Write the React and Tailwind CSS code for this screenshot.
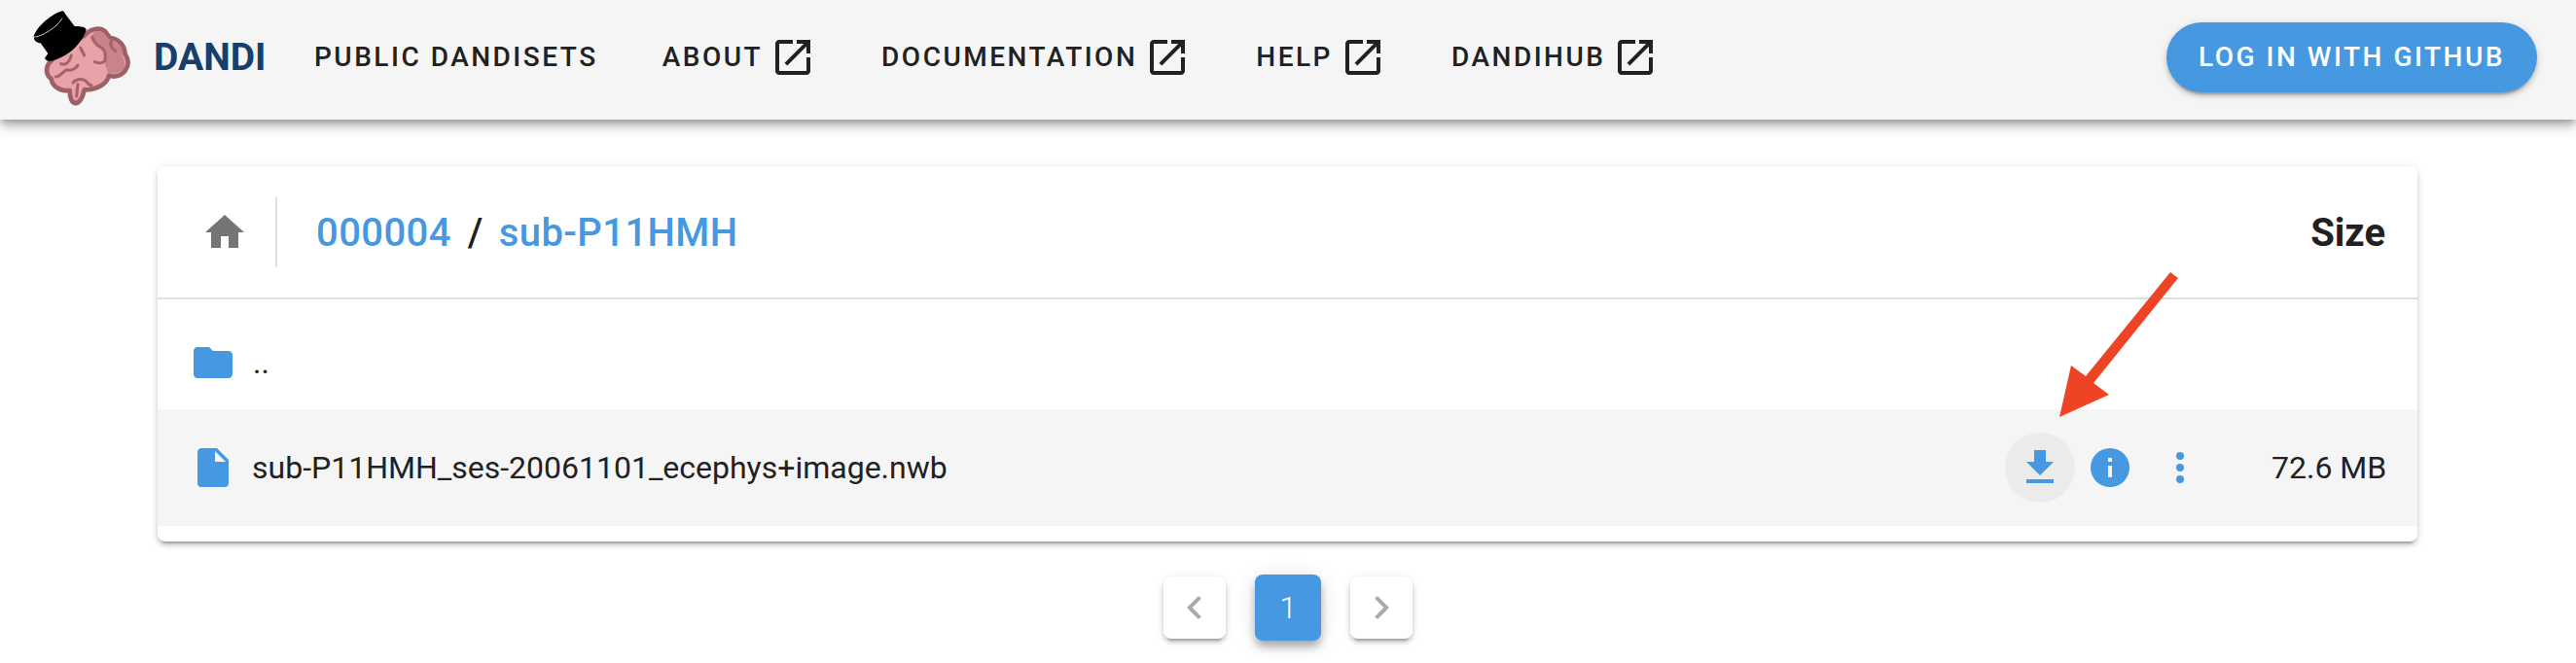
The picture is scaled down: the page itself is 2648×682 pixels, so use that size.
const ICONS = {
  open: "M19 19H5V5h7V3H5c-1.11 0-2 .9-2 2v14c0 1.1.89 2 2 2h14c1.1 0 2-.9 2-2v-7h-2v7zM14 3v2h3.59l-9.83 9.83 1.41 1.41L19 6.41V10h2V3h-7z",
  home: "M10 20v-6h4v6h5v-8h3L12 3 2 12h3v8h5z",
  folder: "M10 4H4c-1.1 0-1.99.9-1.99 2L2 18c0 1.1.9 2 2 2h16c1.1 0 2-.9 2-2V8c0-1.1-.9-2-2-2h-8l-2-2z",
  file: "M13 9V3.5L18.5 9M6 2c-1.11 0-2 .89-2 2v16a2 2 0 002 2h12a2 2 0 002-2V8l-6-6H6z",
  download: "M5 20h14v-2H5m14-9h-4V3H9v6H5l7 7 7-7z",
  info: "M13 9h-2V7h2m0 10h-2v-6h2m-1-9A10 10 0 002 12a10 10 0 0010 10 10 10 0 0010-10A10 10 0 0012 2z",
  dots: "M12 16a2 2 0 012 2 2 2 0 01-2 2 2 2 0 01-2-2 2 2 0 012-2m0-6a2 2 0 012 2 2 2 0 01-2 2 2 2 0 01-2-2 2 2 0 012-2m0-6a2 2 0 012 2 2 2 0 01-2 2 2 2 0 01-2-2 2 2 0 012-2z",
  left: "M15.41 7.41L14 6l-6 6 6 6 1.41-1.41L10.83 12z",
  right: "M8.59 16.59L10 18l6-6-6-6-1.41 1.41L13.17 12z",
};

function Icon({ name, className }) {
  return (
    <svg viewBox="0 0 24 24" className={`w-12 h-12 shrink-0 fill-current ${className || ""}`}>
      <path d={ICONS[name]} fillRule={name === "file" ? "evenodd" : "nonzero"} />
    </svg>
  );
}

function Logo() {
  return (
    <svg viewBox="0 0 420 330" className="w-[140px] h-[110px] shrink-0">
      <path
        d="M200 95C215 75 245 68 262 80C272 90 275 98 280 102C305 104 325 125 325 150C335 165 340 185 326 203C312 220 292 224 276 218C272 240 245 262 200 262C196 275 196 292 178 303C160 306 155 285 155 264C125 268 100 250 98 228C80 215 78 190 100 170C130 130 170 110 200 95Z"
        fill="#e8a2a8"
        stroke="#9c6066"
        strokeWidth="14"
        strokeLinejoin="round"
      />
      <path
        d="M222 95C235 78 250 78 262 88C268 100 280 110 295 112C315 125 320 145 316 158C328 175 328 192 316 204C300 214 285 214 272 208L262 176C270 150 262 135 240 125Z"
        fill="#c9838a"
      />
      <g fill="none" stroke="#a0646a" strokeWidth="9" strokeLinecap="round" strokeLinejoin="round">
        <path d="M224 100C232 118 240 125 246 128C262 135 268 150 264 172C258 180 245 182 232 176" />
        <path d="M284 108C278 120 282 135 296 142" />
        <path d="M188 132L200 156" />
        <path d="M160 156C155 175 145 188 128 182" />
        <path d="M180 186C172 200 155 205 145 200C130 210 125 222 112 222" />
        <path d="M165 240C175 228 195 225 206 236C212 245 215 248 222 248" />
        <path d="M180 245L176 282" />
      </g>
      <path
        d="M44 97C55 65 100 28 132 19C137 19 139 24 141 28L170 66C185 66 200 66 206 75C200 105 165 150 115 168C100 174 85 178 78 164L88 150L65 118C55 118 44 112 44 97Z"
        fill="#000"
      />
      <path d="M44 100C70 98 115 70 132 42" fill="none" stroke="#ededed" strokeWidth="2.5" strokeLinecap="round" />
    </svg>
  );
}

function NavItem({ label, external, className }) {
  return (
    <div className={`flex items-center text-[28px] font-medium tracking-[2.5px] text-[#212121] ${className || ""}`}>
      <span>{label}</span>
      {external && <Icon name="open" className="ml-[7px] text-[#212121]" />}
    </div>
  );
}

function PageBox({ icon }) {
  return (
    <div className="w-16 h-16 rounded-lg bg-white flex items-center justify-center text-[#aaaaaa] shadow-[0_6px_2px_-4px_rgba(0,0,0,0.2),0_4px_4px_0_rgba(0,0,0,0.14),0_2px_10px_0_rgba(0,0,0,0.12)]">
      <Icon name={icon} />
    </div>
  );
}

export default function App() {
  return (
    <div className="relative h-[682px] overflow-hidden bg-white font-['Roboto',sans-serif] text-[#212121]">
      <header className="relative z-10 h-[123px] pb-[5px] flex items-center bg-[#f5f5f5] shadow-[0_4px_8px_-2px_rgba(0,0,0,0.3),0_8px_10px_0_rgba(0,0,0,0.14),0_2px_20px_0_rgba(0,0,0,0.12)]">
        <div className="ml-[20px] self-start mt-[5px]">
          <Logo />
        </div>
        <div className="ml-[-2px] w-[113px] text-[39px] leading-none font-bold text-[#163f6b]">DANDI</div>
        <NavItem label="PUBLIC DANDISETS" className="ml-[52px]" />
        <NavItem label="ABOUT" external className="ml-[66px]" />
        <NavItem label="DOCUMENTATION" external className="ml-[67px]" />
        <NavItem label="HELP" external className="ml-[67px]" />
        <NavItem label="DANDIHUB" external className="ml-[67px]" />
        <div className="ml-auto mr-[40px] h-[72px] w-[381px] rounded-full bg-[#4699e0] flex items-center justify-center text-[28px] font-medium tracking-[2.5px] text-white shadow-[0_6px_2px_-4px_rgba(0,0,0,0.2),0_4px_4px_0_rgba(0,0,0,0.14),0_2px_10px_0_rgba(0,0,0,0.12)]">
          LOG IN WITH GITHUB
        </div>
      </header>

      <main className="pt-[48px]">
        <div className="ml-[162px] w-[2323px] rounded-lg bg-white pb-4 shadow-[0_6px_2px_-4px_rgba(0,0,0,0.2),0_4px_4px_0_rgba(0,0,0,0.14),0_2px_10px_0_rgba(0,0,0,0.12)]">
          <div className="h-[137px] flex items-center border-b-2 border-[#e0e0e0] pr-[33px]">
            <Icon name="home" className="ml-[45px] text-[#757575]" />
            <div className="ml-[28px] w-[2px] h-[72px] bg-[#e0e0e0]" />
            <div className="ml-[40px] mt-[2px] flex items-center text-[40px] font-medium tracking-[0.4px]">
              <span className="text-[#4699e0]">000004</span>
              <span className="ml-[17px] mr-[16px]">/</span>
              <span className="text-[#4699e0]">sub-P11HMH</span>
            </div>
            <div className="ml-auto mt-[2px] text-[40px] font-bold">Size</div>
          </div>
          <div className="h-[113px] flex items-center pl-[33px] pt-[17px] text-[32px]">
            <Icon name="folder" className="text-[#4699e0]" />
            <span className="ml-[17px]">..</span>
          </div>
          <div className="h-[120px] flex items-center bg-[#f5f5f5] pl-[33px] pr-[33px] text-[32px]">
            <Icon name="file" className="text-[#4699e0]" />
            <span className="ml-[16px]">sub-P11HMH_ses-20061101_ecephys+image.nwb</span>
            <div className="ml-auto flex items-center text-[#4699e0]">
              <div className="w-[72px] h-[72px] rounded-full bg-[#ebebeb] flex items-center justify-center">
                <Icon name="download" />
              </div>
              <div className="w-[72px] h-[72px] flex items-center justify-center">
                <Icon name="info" />
              </div>
              <div className="w-[72px] h-[72px] flex items-center justify-center">
                <Icon name="dots" />
              </div>
            </div>
            <div className="ml-[58px] w-[117px] text-right whitespace-nowrap shrink-0">72.6 MB</div>
          </div>
        </div>

        <nav className="mt-[34px] flex items-center justify-center gap-[30px]">
          <PageBox icon="left" />
          <div className="w-[68px] h-[68px] rounded-lg bg-[#4699e0] flex items-center justify-center text-[32px] font-light text-white shadow-[0_6px_10px_-2px_rgba(0,0,0,0.2),0_8px_10px_0_rgba(0,0,0,0.14),0_2px_20px_0_rgba(0,0,0,0.12)]">
            1
          </div>
          <PageBox icon="right" />
        </nav>
      </main>

      <svg viewBox="0 0 2648 682" className="absolute inset-0 z-20 w-[2648px] h-[682px] pointer-events-none">
        <polygon points="2231,280 2239,286 2152,394 2168,406 2117,429 2129,376 2144,387" fill="#ee4325" />
      </svg>
    </div>
  );
}
